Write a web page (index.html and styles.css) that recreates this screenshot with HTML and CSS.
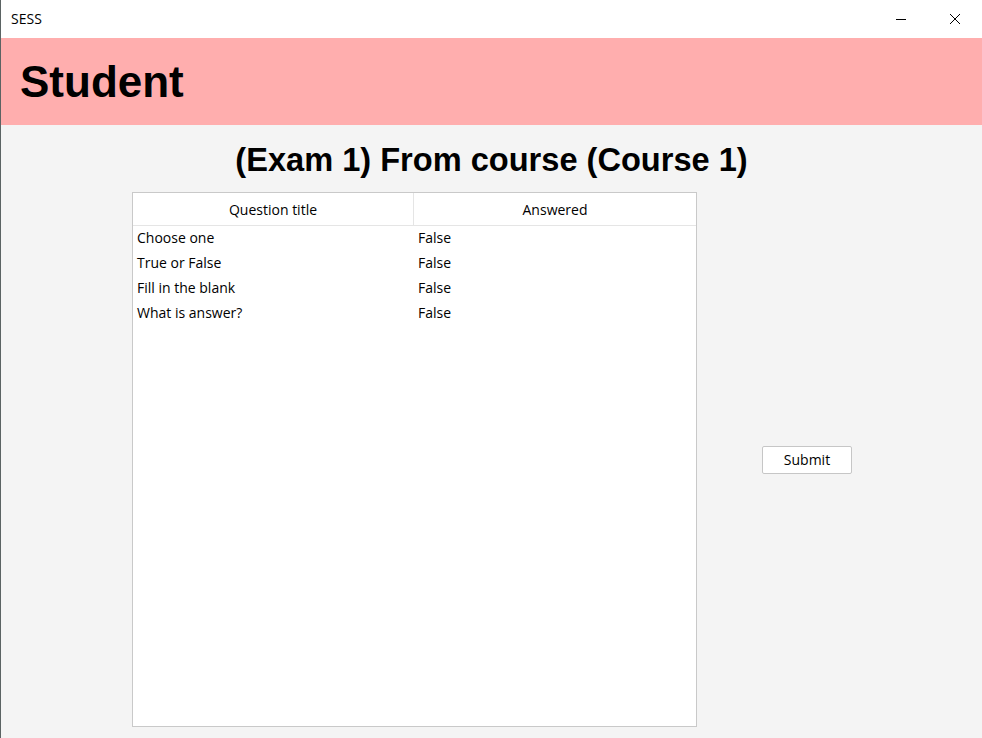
FILE: index.html
```html
<!DOCTYPE html>
<html>
<head>
<meta charset="utf-8">
<link rel="stylesheet" href="styles.css">
</head>
<body>
<div class="window">
  <div class="titlebar">
    <span class="app-name">SESS</span>
    <div class="controls">
      <span class="ctrl ctrl-min">
        <svg width="12" height="12" viewBox="0 0 12 12"><line x1="1" y1="6.5" x2="11" y2="6.5" stroke="#000" stroke-width="1"/></svg>
      </span>
      <span class="ctrl ctrl-close">
        <svg width="12" height="12" viewBox="0 0 12 12"><line x1="1" y1="1" x2="11" y2="11" stroke="#000" stroke-width="1"/><line x1="11" y1="1" x2="1" y2="11" stroke="#000" stroke-width="1"/></svg>
      </span>
    </div>
  </div>
  <div class="header">Student</div>
  <div class="content">
    <h1 class="exam-title">(Exam 1) From course (Course 1)</h1>
    <div class="main">
      <div class="table">
        <div class="thead">
          <div class="th">Question title</div>
          <div class="th">Answered</div>
        </div>
        <div class="tbody">
          <div class="tr"><div class="td">Choose one</div><div class="td">False</div></div>
          <div class="tr"><div class="td">True or False</div><div class="td">False</div></div>
          <div class="tr"><div class="td">Fill in the blank</div><div class="td">False</div></div>
          <div class="tr"><div class="td">What is answer?</div><div class="td">False</div></div>
        </div>
      </div>
      <div class="side">
        <button class="submit">Submit</button>
      </div>
    </div>
  </div>
</div>
</body>
</html>
```

FILE: styles.css
```css
html, body {
  margin: 0;
  padding: 0;
  height: 100%;
}
body {
  background: #f4f4f4;
  font-family: "Open Sans", "Noto Sans", sans-serif;
}
.window {
  height: 738px;
  border-left: 1px solid #5b6363;
  box-sizing: border-box;
  display: flex;
  flex-direction: column;
  overflow: hidden;
}
.titlebar {
  height: 38px;
  background: #fff;
  display: flex;
  align-items: center;
  justify-content: space-between;
  flex-shrink: 0;
}
.app-name {
  font-size: 14px;
  color: #000;
  padding-left: 10px;
  padding-bottom: 1px;
}
.controls {
  display: flex;
  height: 100%;
}
.ctrl {
  display: flex;
  align-items: center;
  justify-content: center;
}
.ctrl-min {
  width: 46px;
  margin-right: 4px;
}
.ctrl-close {
  width: 54px;
}
.header {
  height: 87px;
  background: #ffaeae;
  font-family: "Liberation Sans", Arial, sans-serif;
  font-weight: bold;
  font-size: 44px;
  color: #000;
  display: flex;
  align-items: center;
  padding-left: 19px;
  flex-shrink: 0;
}
.content {
  flex: 1;
  display: flex;
  flex-direction: column;
}
.exam-title {
  margin: 0;
  font-family: "Liberation Sans", Arial, sans-serif;
  font-weight: bold;
  font-size: 32.6px;
  text-align: center;
  height: 67px;
  line-height: 69px;
  color: #000;
}
.main {
  display: flex;
  align-items: center;
  padding-left: 131px;
}
.table {
  width: 565px;
  height: 535px;
  box-sizing: border-box;
  background: #fff;
  border: 1px solid #c9c9c9;
  font-size: 14px;
  color: #000;
}
.thead {
  display: grid;
  grid-template-columns: 281px 1fr;
  height: 32px;
  border-bottom: 1px solid #e5e5e5;
}
.th {
  display: flex;
  align-items: center;
  justify-content: center;
  padding-top: 1px;
}
.th:first-child {
  border-right: 1px solid #e5e5e5;
}
.tbody {
  margin-top: -1px;
}
.tr {
  display: grid;
  grid-template-columns: 281px 1fr;
  height: 25px;
  align-items: center;
}
.td {
  padding-left: 4px;
}
.side {
  display: flex;
  align-items: center;
  padding-left: 65px;
}
.submit {
  width: 90px;
  height: 28px;
  background: #fff;
  border: 1px solid #c6c6c6;
  border-radius: 2px;
  font-family: "Open Sans", "Noto Sans", sans-serif;
  font-size: 14px;
  color: #000;
  padding: 0;
}
```
